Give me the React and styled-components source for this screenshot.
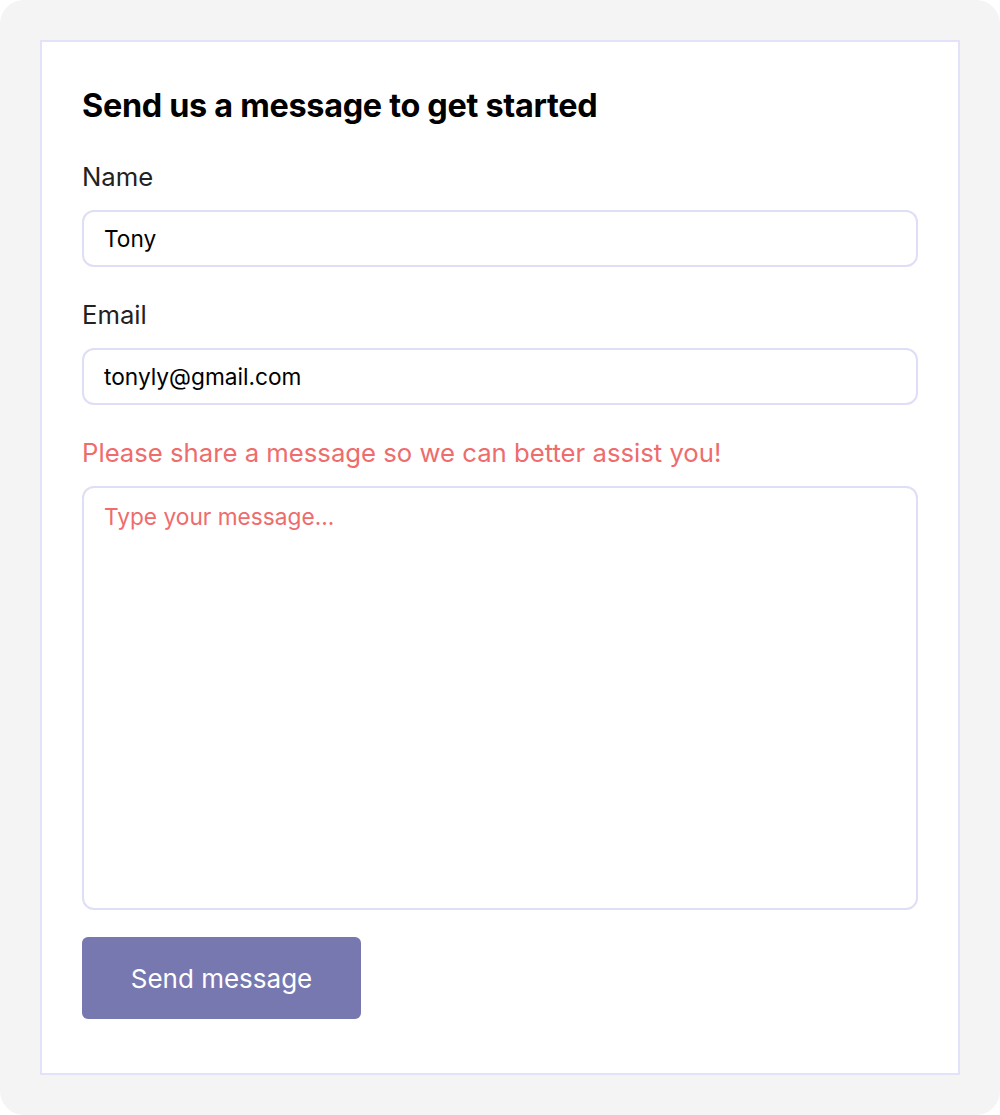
import React from 'react';
import styled, { createGlobalStyle } from 'styled-components';

const GlobalStyle = createGlobalStyle`
  html, body {
    margin: 0;
    padding: 0;
    background: #ffffff;
  }
  * {
    box-sizing: border-box;
  }
`;

const Page = styled.div`
  width: 1000px;
  height: 1115px;
  background: #f4f4f4;
  border-radius: 24px;
  padding: 40px;
  font-family: Inter, "Liberation Sans", sans-serif;
`;

const Card = styled.form`
  background: #fff;
  border: 2px solid #e2e2f9;
  height: 1035px;
  padding: 43px 40px 40px;
  display: flex;
  flex-direction: column;
`;

const Title = styled.h2`
  margin: 0 0 33px;
  font-size: 32.4px;
  line-height: 42px;
  font-weight: 700;
  color: #000;
  letter-spacing: -0.3px;
`;

const Field = styled.div`
  display: flex;
  flex-direction: column;
  gap: 17px;
  margin-bottom: ${(p) => p.$gap || 31}px;
`;

const Label = styled.label`
  font-size: 25.7px;
  line-height: 33px;
  color: ${(p) => (p.$error ? '#ee6c6c' : '#222')};
`;

const Input = styled.input`
  height: 57px;
  width: 100%;
  border: 2px solid #dedef6;
  border-radius: 12px;
  padding: 0 20px;
  font-family: inherit;
  font-size: 22.7px;
  color: #000;
  background: #fff;
  outline: none;
`;

const TextArea = styled.textarea`
  height: 424px;
  width: 100%;
  border: 2px solid #dedef6;
  border-radius: 12px;
  padding: 14px 20px;
  font-family: inherit;
  font-size: 22.7px;
  line-height: 30px;
  resize: none;
  outline: none;
  &::placeholder {
    color: #ee6c6c;
    opacity: 1;
  }
`;

const Button = styled.button`
  align-self: flex-start;
  width: 279px;
  height: 82px;
  border: none;
  border-radius: 6px;
  background: #7878b0;
  color: #fff;
  font-family: inherit;
  font-size: 26px;
  cursor: pointer;
`;

export default function App() {
  return (
    <>
      <GlobalStyle />
      <Page>
        <Card onSubmit={(e) => e.preventDefault()}>
          <Title>Send us a message to get started</Title>
          <Field>
            <Label htmlFor="name">Name</Label>
            <Input id="name" defaultValue="Tony" />
          </Field>
          <Field>
            <Label htmlFor="email">Email</Label>
            <Input id="email" defaultValue="tonyly@gmail.com" />
          </Field>
          <Field $gap={27}>
            <Label htmlFor="msg" $error>Please share a message so we can better assist you!</Label>
            <TextArea id="msg" placeholder="Type your message..." />
          </Field>
          <Button type="submit">Send message</Button>
        </Card>
      </Page>
    </>
  );
}
